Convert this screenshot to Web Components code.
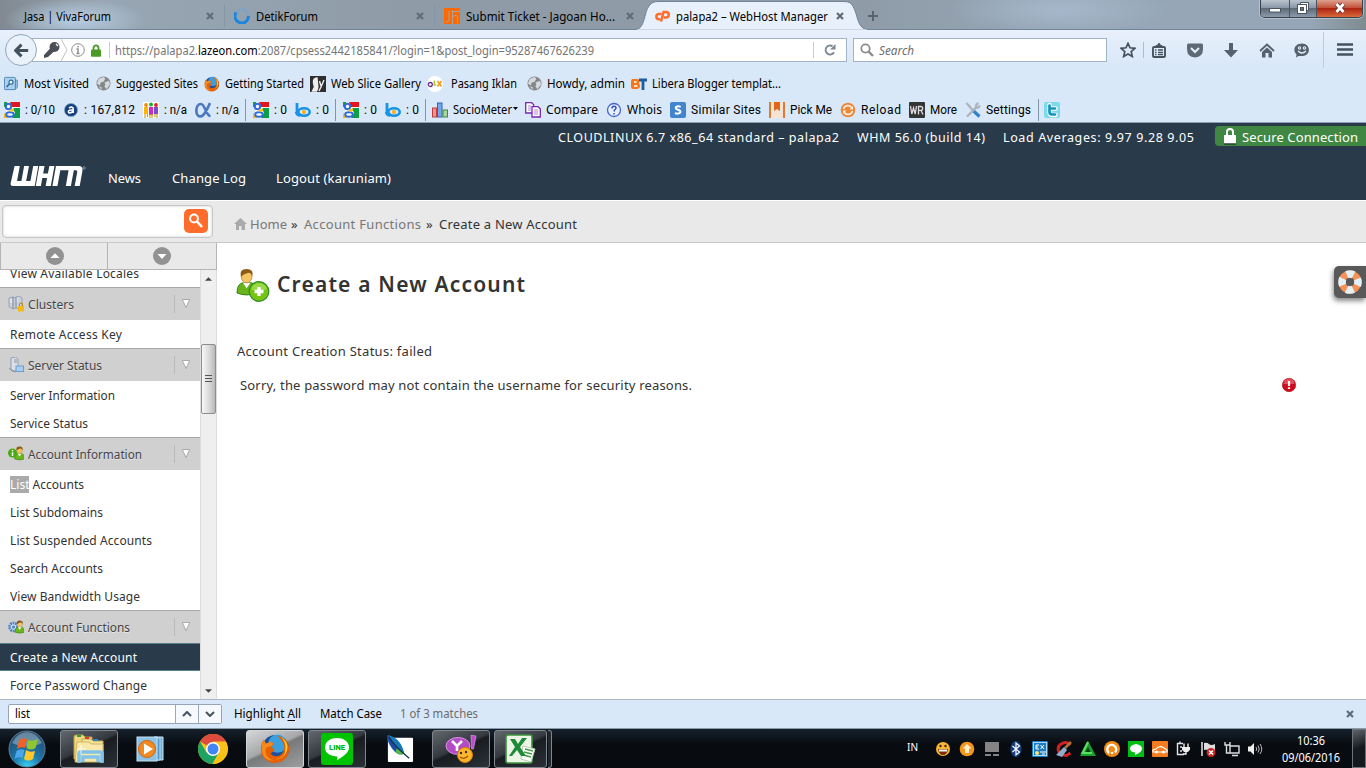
<!DOCTYPE html>
<html lang="en">
<head>
<meta charset="utf-8">
<title>palapa2 – WebHost Manager</title>
<style>
html,body{margin:0;height:100%;overflow:hidden;background:#fff}
body{font:12px "Noto Sans","Open Sans",sans-serif;color:#000;width:1366px;height:768px}
</style>
</head>
<body>
<desk-screen></desk-screen>
<script>
/* ---------- icon drawings: [viewBox width, viewBox height, markup] ---------- */
const fox = `<circle cx="16" cy="16" r="14" fill="#1d4f9c"/><circle cx="18" cy="11" r="9.500" fill="#3ba0dd"/><path d="M18 3c8 1 13 8 12 15-1 8-8 13-15 13S1 25 1 17c0-4 1-8 3-10l2 4 5-2 4 2-3 3c0 2 3 2 3 4l-4 3c2 4 9 4 12 0 4-5 2-12-5-18z" fill="#e66000"/><path d="M22 4c6 4 8 10 5 16-2 4-6 7-11 7 6-1 10-4 10-9 1-5 0-9-4-14z" fill="#ffcb3a"/><path d="M2 14c0-3 1-6 2-7l2 4 5-2 3 2-3 3c-4 0-6 2-5 7 1 4 5 7 9 7C7 30 1 24 2 14z" fill="#f58a1f"/>`;
const google = `<path d="M4 0h12v16H6L2 9z" fill="#fff"/><path d="M6 0h10v5H8z" fill="#e3141c"/><path d="M9 6h7v10H8l3-5z" fill="#0d9c48"/><path d="M0 0h3v2L1 5H0z" fill="#1c9b45"/><path d="M0 11l3 3 1 2H0z" fill="#f7b619"/><circle cx="4.500" cy="4.500" r="2.700" fill="#fff" stroke="#2d6cdc" stroke-width="2"/><ellipse cx="6" cy="12.500" rx="3.800" ry="2.300" fill="#fff" stroke="#2d6cdc" stroke-width="1.900"/><path d="M5 8l5-2v3l-3 1z" fill="#fbc21c"/>`;
const bing = `<path d="M2 0v10.500" stroke="#1593e6" stroke-width="2.800"/><ellipse cx="9" cy="9" rx="5.700" ry="3.700" fill="none" stroke="#1593e6" stroke-width="2.600"/><path d="M1 9q0 3 4 4" fill="none" stroke="#1593e6" stroke-width="2"/><circle cx="9" cy="9" r="2.200" fill="#f9b130"/>`;
const globe = `<circle cx="8" cy="8" r="7.500" fill="#85888b"/><path d="M3 3l5-2 2 2-2 3-3 1-1 3-3-2zM9 7l5-2 1 4-4 5-2-3 1-2zM3 11l3 1v3z" fill="#d6dadd"/>`;
const man = (x,y,s)=>`<g transform="translate(${x} ${y}) scale(${s})"><path d="M0 25q0-10 7-11h7q6 1 6 11-10 4-20 0z" fill="#67b51b" stroke="#2f7a10"/><path d="M6 14l4 6 4-6z" fill="#fff"/><ellipse cx="10" cy="8" rx="5.500" ry="6.500" fill="#f6c463" stroke="#9a6413" stroke-width=".6"/><path d="M4 8Q2 0 10 0q8 0 6 8-1-4-4-4-5 1-8 4z" fill="#8d5a17"/></g>`;
const servers = `<path d="M1 2l4-1v12l-4-2zM5 1l3 1v10l-3 1zM8 1l3-1 3 2v9l-3 2-3-1z" fill="#c9d0da" stroke="#8792a5" stroke-width=".7"/><path d="M2 4h2M2 6h2M9 3h1M9 5h1" stroke="#fff"/>`;
const I = {
back:[18,16,`<path d="M9 1L2 8l7 7M3 8h14" fill="none" stroke="#44505c" stroke-width="3.600"/>`],
key:[17,16,`<circle cx="11.500" cy="5" r="5" fill="#4b5056"/><path d="M8.500 5l3 4L5 15l-4 1v-3z" fill="#4b5056"/><path d="M13 2l2 2" stroke="#fff" stroke-width="1.300"/>`],
info:[14,14,`<circle cx="7" cy="7" r="6.300" fill="none" stroke="#8b8b8b"/><path d="M7 3v1.600M5.500 6H7v4.500M5.500 10.500h3" fill="none" stroke="#8b8b8b" stroke-width="1.400"/>`],
lock:[10,13,`<path d="M2.500 6V4a2.500 2.700 0 0 1 5 0v2" fill="none" stroke="#4a9a25" stroke-width="1.800"/><rect y="5.500" width="10" height="7.200" rx="1" fill="#4a9a25"/>`],
wlock:[12,17,`<path d="M3 7V4a3 3 0 0 1 6 0v3" fill="none" stroke="#fff" stroke-width="2"/><rect y="7" width="12" height="8.500" rx=".5" fill="#fff"/><path d="M0 16h12" stroke="#172218"/>`],
reload:[12,12,`<path d="M10 8.200A4.500 4.500 0 1 1 8.500 2.200" fill="none" stroke="#7d8996" stroke-width="1.900"/><path d="M11.500 0v5.500H6z" fill="#7d8996"/>`],
mag:[14,14,`<circle cx="5.500" cy="5.500" r="4.200" fill="none" stroke="#8c8c8c" stroke-width="1.800"/><path d="M8.700 8.700L13 13" stroke="#8c8c8c" stroke-width="2.400"/>`],
wmag:[16,16,`<circle cx="6" cy="5.500" r="3.900" fill="none" stroke="#fff" stroke-width="2"/><path d="M9 8.500L14 14" stroke="#fff" stroke-width="2.600"/>`],
star:[16,16,`<path d="M8 1.300l2 4.500 4.900.5-3.700 3.300 1.100 4.900L8 12l-4.300 2.500 1.100-4.900L1.100 6.300 6 5.800z" fill="none" stroke="#46535f" stroke-width="1.700"/>`],
clip:[14,15,`<rect x="1" y="4" width="12" height="10" rx="1" fill="none" stroke="#46535f" stroke-width="1.900"/><path d="M4 4V2.500h1.500L6.500.500h1l1 2H10V4z" fill="#46535f" stroke="#46535f"/><path d="M3 7h1.500M6 7h5M3 9.300h1.500M6 9.300h5M3 11.500h1.500M6 11.500h5" stroke="#46535f" stroke-width="1.300"/>`],
pocket:[16,15,`<path d="M1.500.500h13q1.500 0 1.500 1.500v4q0 8-8 8.500Q0 14 0 6V2Q0 .500 1.500.500z" fill="#5d6975"/><path d="M4 5l4 4 4-4" fill="none" stroke="#e6effa" stroke-width="2"/>`],
down:[14,15,`<path d="M5 0h4v7h5l-7 7.500L0 7h5z" fill="#55616d"/>`],
home:[16,15,`<path d="M1 8l7-6.500L15 8" fill="none" stroke="#55616d" stroke-width="1.900"/><path d="M3 9l5-4.500L13 9v5.500H9.500V10h-3v4.500H3z" fill="#55616d"/>`],
chat:[16,15,`<path d="M8 .500c9 0 9 12 1 12.500L4.500 13 2 14.500l.5-3C-2 7 1 .500 8 .500z" fill="#55616d"/><path d="M4 8q4 4 8 0" fill="none" stroke="#e6effa" stroke-width="1.200"/><circle cx="5.500" cy="5" r="1.700" fill="#e6effa"/><circle cx="10.500" cy="5" r="1.700" fill="#e6effa"/><path d="M5.500 4.500v1M10.500 4.500v1" stroke="#46535f"/>`],
menu:[16,14,`<path d="M0 1.500h16M0 6.500h16M0 11.500h16" stroke="#46535f" stroke-width="2.600"/>`],
x:[8,8,`<path d="M1 1l6 6M7 1L1 7" stroke="#5f6d7a" stroke-width="2.200"/>`],
plus:[10,10,`<path d="M5 0v10M0 5h10" stroke="#57636f" stroke-width="2"/>`],
spin:[16,16,`<circle cx="8" cy="8" r="6.500" fill="none" stroke="#76a5cc" stroke-width="2"/><path d="M2 4.500A6.800 6.800 0 1 0 14.500 8" fill="none" stroke="#1b86e0" stroke-width="3"/>`],
jh:[16,16,`<rect width="16" height="16" fill="#ff6a00"/><path d="M5 3v9q0 2-3.500 2M8.500 2v14M9 8.500q4.500-3 4.500 2V16M8 3.500h8" fill="none" stroke="#a9a49f" stroke-width="1"/>`],
cp:[16,12,`<path d="M7.500 4H5a2.600 2.600 0 0 0 0 5.200h1.200" fill="none" stroke="#ff6c2c" stroke-width="2.600"/><path d="M7 11.500L9.600 2H12a2.700 2.700 0 0 1 0 5.500H9.800" fill="none" stroke="#ff6c2c" stroke-width="2.500"/>`],
most:[16,16,`<path d="M13 4h2.500v8L13 15z" fill="#8fbbe0" stroke="#4580b0" stroke-width=".7"/><rect x=".5" y="1" width="12.500" height="14" rx="1" fill="#a9d0ec" stroke="#447fae"/><circle cx="8" cy="6.500" r="2.300" fill="#e6f4ff" stroke="#2e6798" stroke-width="1.300"/><path d="M6.300 8.200L3 12" stroke="#2e6798" stroke-width="1.700"/>`],
globe:[16,16,globe], fox:[32,32,fox], google:[16,16,google], bing:[16,14,bing],
slice:[16,16,`<rect width="16" height="16" fill="#2e2e2e"/><path d="M7 2q-4 0-3.500 5l1 4-2 4h4q2-3 1-7zM9.500 5l1.500 5M14 4l-3 7-2 4" fill="#eee" stroke="#eee" stroke-width="1.400"/>`],
olx:[16,16,`<circle cx="8" cy="8" r="8" fill="#fff"/><circle cx="3.300" cy="8.500" r="2" fill="none" stroke="#6a2d90" stroke-width="1.300"/><path d="M7.300 4.500V9h2" fill="none" stroke="#a8cb2b" stroke-width="1.400"/><path d="M10.500 5l4 5.500M14.500 5l-4 5.500" stroke="#f19a1a" stroke-width="1.500"/>`],
bt:[16,12,`<path d="M1 1h5q3 0 2 4 3 5-2 6H2q-2 0-2-2V3z" fill="#f57717"/><path d="M3 4h2.500M3 8h3.500" stroke="#fff" stroke-width="1.500"/><path d="M8 2h8M12 2v10" stroke="#1f5d9d" stroke-width="2.800"/>`],
alexa:[16,16,`<circle cx="8" cy="8" r="7.500" fill="#163f7d" stroke="#7fa6c6"/><path d="M5.500 5.500q5-2 5 1v5M10 8q-5-.5-5 2t5 0" fill="none" stroke="#fff" stroke-width="1.800"/>`],
people:[16,16,`<rect width="16" height="16" rx="1" fill="#fff"/><g stroke-width="4"><path d="M3 5v7" stroke="#ffb400"/><path d="M8 5v8" stroke="#d02ac5"/><path d="M13 5v7" stroke="#7a4bd0"/></g><circle cx="3" cy="3" r="1.900" fill="#f08c00"/><circle cx="8" cy="2.500" r="1.900" fill="#18ad33"/><circle cx="13" cy="3" r="1.900" fill="#e02020"/><path d="M2 12v4M4.500 12v3M7 12v4M9 12v4M12 12v3M14 12v4" stroke="#c6a224" stroke-width="1.200"/>`],
alpha:[16,16,`<path d="M15 1q-3 7-5.500 10.500-2 3-4.500 3C0 14 0 2 6 2c4 0 5 12 9.500 12" fill="none" stroke="#4b78bf" stroke-width="2.700"/>`],
bars:[16,16,`<rect x=".5" y="6" width="4" height="9" fill="#ef9393" stroke="#c13d3d"/><rect x="5.500" y="1" width="4.500" height="14" fill="#75a7ed" stroke="#2c65b8"/><rect x="11" y="8" width="4.500" height="7" fill="#a5d89a" stroke="#3d8b34"/>`],
compare:[16,16,`<path d="M.7.700h6l2 2V11h-8z" fill="#fff" stroke="#7a26b5" stroke-width="1.300"/><path d="M7 4.700h6l2.300 2V15H7z" fill="#fff" stroke="#7a26b5" stroke-width="1.300"/><path d="M3 4h3M3 6h3M3 8h3M9 8h4M9 10h4M9 12h4" stroke="#b487d6"/>`],
whois:[16,16,`<circle cx="8" cy="8" r="6.500" fill="#e9f0ff" stroke="#4664c9" stroke-width="1.300"/><path d="M6 6.500q0-2.300 2-2.300T10 6q0 1-1.500 2l-.5 1.500M8 11v1.500" fill="none" stroke="#3252bd" stroke-width="1.500"/>`],
s:[16,16,`<rect width="16" height="16" rx="2" fill="#4384cf"/><path d="M10.700 5q-2.700-1.500-4.700 0-1 2 2 2.800 3.500 1 2 3Q8 12.500 5 11" fill="none" stroke="#fff" stroke-width="2"/>`],
pick:[16,16,`<rect width="16" height="16" rx="1" fill="#f4e3d3"/><path d="M1 0v16M15 0v16" stroke="#dc7b34" stroke-width="2"/><path d="M5 0h6v9L8 7 5 9z" fill="#e0661a"/>`],
rel:[16,16,`<circle cx="8" cy="8" r="7.300" fill="#e9883d"/><path d="M3.500 7A4.600 4.600 0 0 1 12 6M12.500 9A4.600 4.600 0 0 1 4 10" fill="none" stroke="#ffe9d2" stroke-width="1.700"/><path d="M13 4v3.500H9.500zM3 12V8.500h3.500z" fill="#ffe9d2"/>`],
wr:[16,16,`<rect width="16" height="16" rx="1" fill="#353535"/><path d="M1.500 4l1.300 8L4.500 6l1.700 6L7.500 4M9.500 12.500V4.500h2.200q2 0 2 1.900t-2 2H10M12 8.500l2 4" fill="none" stroke="#ddd" stroke-width="1.300"/>`],
tools:[16,16,`<path d="M1.500 1l6 7" stroke="#aab2bb" stroke-width="2"/><path d="M8 8.500l6.500 6" stroke="#2f83cf" stroke-width="3.200"/><path d="M2 14.500l9-9q-.5-3 2.500-4.500M15 3.500q-1.500 3-4 2" fill="none" stroke="#aab2bb" stroke-width="2.200"/>`],
tw:[16,16,`<rect width="16" height="16" rx="2" fill="#7bdaef"/><path d="M5.500 3v7q0 3 3 3h3M5.500 6.500h6" fill="none" stroke="#fff" stroke-width="4.500" stroke-linecap="round"/><path d="M5.500 3.500V10q0 2.500 3 2.500h2.500M5.500 6.500h5.500" fill="none" stroke="#1694bd" stroke-width="2.700" stroke-linecap="round"/>`],
whm:[76,22,`<path d="M4.500 1h5.200L7 16h4.300L14 1h4.800L16 16h4.200L23 1h5L24.500 21H3Q0 21 .700 18zM29 1h5.200l-1.400 7.500h4.700L39 1h5l-3.600 20h-5.100l1.400-8H32l-1.400 8h-5.100zM45.500 1H68q4.500 0 3.700 5L69 21h-5l2.600-14q.2-1.800-1.300-1.800h-2.100L60.300 21h-5L58 5.200h-8.200L47 21h-5z" transform="translate(0 0) scale(1.010 1)" fill="#fff"/><circle cx="74" cy="3" r="1.200" fill="none" stroke="#aab4be" stroke-width=".7"/>`],
ghome:[13,12,`<path d="M0 6l6.500-6L13 6h-2v6H7.500V8H5v4H2V6z" fill="#aaa"/>`],
up:[18,18,`<circle cx="9" cy="9" r="9" fill="#929292"/><path d="M4.500 11L9 6.200 13.500 11z" fill="#fff"/>`],
dn:[18,18,`<circle cx="9" cy="9" r="9" fill="#929292"/><path d="M4.500 7L9 12l4.500-5z" fill="#fff"/>`],
tri:[8,9,`<path d="M.3.500h7.400L4 8.500z" fill="#fff" stroke="#8f8f8f" stroke-width=".7"/>`],
clusters:[16,16,servers+`<rect x="10" y="10" width="6" height="5.500" fill="#f5b916"/><path d="M11.500 10V8.500a1.500 1.500 0 0 1 3 0V10" fill="none" stroke="#b98500"/>`],
status:[16,16,`<path d="M3 1l5-1 2 2v10l-4 2-3-2z" fill="#dbe0e7" stroke="#8792a5" stroke-width=".8"/><path d="M6 3h3M6 5h3M1 11l3 3 4 1" stroke="#8792a5" fill="none"/><rect x="8" y="9" width="7.500" height="5.500" fill="#a9cdf1" stroke="#6c9fd2"/>`],
ainfo:[16,16,man(6.500,.5,.5)+`<circle cx="4.500" cy="7" r="4.500" fill="#48ab13"/><path d="M4.500 4v1.300M4.500 6.300V10" stroke="#fff" stroke-width="1.500"/>`],
afun:[16,16,`<circle cx="5.500" cy="8" r="4" fill="#c5dbf1" stroke="#4d82bd" stroke-width="2.600" stroke-dasharray="1.800 .7"/><circle cx="5.500" cy="8" r="1.500" fill="#4d82bd"/>`+man(7,1.5,.47)],
adduser:[34,33,man(1,0,.96)+`<circle cx="23" cy="22.500" r="9.800" fill="#76c312" stroke="#2c8c28" stroke-width="1.200"/><path d="M15 20a8.500 8.500 0 0 1 16 0q-8 4-16 0z" fill="#aae05b" opacity=".7"/><path d="M23 18v9M18.500 22.500h9" stroke="#fff" stroke-width="3.400"/>`],
err:[14,14,`<circle cx="7" cy="7" r="6.700" fill="#d20a1d" stroke="#9b0d18" stroke-width=".6"/><path d="M1.500 6a5.500 5.500 0 0 1 11 0z" fill="#f06a72" opacity=".7"/><path d="M7 3v5M7 9.300v1.800" stroke="#fff" stroke-width="2.200"/>`],
buoy:[24,24,`<circle cx="12" cy="12" r="8" fill="none" stroke="#f49355" stroke-width="7"/><circle cx="12" cy="12" r="8" fill="none" stroke="#e2f0f8" stroke-width="7.600" stroke-dasharray="7 5.566" stroke-dashoffset="3.500"/>`],
chevu:[10,6,`<path d="M1 5l4-4 4 4" fill="none" stroke="#46535f" stroke-width="2"/>`],
chevd:[10,6,`<path d="M1 1l4 4 4-4" fill="none" stroke="#46535f" stroke-width="2"/>`],
au:[8,4,`<path d="M0 4l4-4 4 4z" fill="#444"/>`], ad:[8,4,`<path d="M0 0l4 4 4-4z" fill="#444"/>`],
start:[38,38,`<defs><radialGradient id="a" cx=".5" cy="1" r="1"><stop offset="0" stop-color="#38d3f5"/><stop offset=".4" stop-color="#1c77ac"/><stop offset="1" stop-color="#26445f"/></radialGradient></defs><circle cx="19" cy="19" r="18" fill="url(#a)" stroke="#5c7f99"/><path d="M4 13Q10 2 19 2t15 11q-14 7-30 0z" fill="#cde2ef" opacity=".4"/><path d="M11 10q4-3 8-1l-2 9q-4-2-8 1z" fill="#f0602a"/><path d="M20 10q4 2 10-1l-2.500 9q-5 3-9 0z" fill="#8fc62f"/><path d="M8.500 21q4-3 8-1l-2 8q-4-2-8 1z" fill="#4aa6e8"/><path d="M18 20q4 3 9 1l-2 8q-5 3-9 0z" fill="#fbc92b"/>`],
folder:[34,30,`<path d="M2 3q0-2 2-2h7l2 2h7v22H2z" fill="#f0d77d" stroke="#b79b46"/><path d="M10 5h9l2 2h10v20H10z" fill="#f5e197" stroke="#c4aa55"/><path d="M5 8h12l2 2h12v18H3z" fill="#f8e9ab" stroke="#cdb565"/><path d="M5 2h4" stroke="#25a33a" stroke-width="2"/><path d="M13 4h4" stroke="#d93a25" stroke-width="2"/><path d="M21 6h5" stroke="#2187d5" stroke-width="2"/><path d="M7 29v-9q0-2 2-2h19q2 0 2 2v9M11 28v-5h15v5" fill="none" stroke="#80c2e9" stroke-width="3.500"/><path d="M9 11v9M5 15h9" stroke="#fff" stroke-width=".8"/>`],
media:[28,26,`<path d="M18 1h9v23h-9z" fill="#71aed5" stroke="#cce8f7"/><path d="M15 2h9v22h-9z" fill="#5898c8" stroke="#b6daf0"/><rect x="1" y="1" width="20" height="24" fill="#8ac1e4" stroke="#c4e3f5"/><circle cx="11" cy="13" r="8.500" fill="#f18a21" stroke="#d06511"/><path d="M8 7.500v11l9-5.500z" fill="#fff"/>`],
chrome:[30,30,`<circle cx="15" cy="15" r="15" fill="#fbc116"/><path d="M15 15L2 7.500A15 15 0 0 1 28 7.500H15z" fill="#dd4b3e"/><path d="M2 7.500A15 15 0 0 0 14.500 30L21 18.500 15 15 8.500 18.500z" fill="#1da362"/><path d="M15 8h13a15 15 0 0 1-13.500 22L21 18.500z" fill="#fbc116"/><circle cx="15" cy="15" r="7" fill="#fff"/><circle cx="15" cy="15" r="5.500" fill="#4285f4"/>`],
line:[32,32,`<rect width="32" height="32" rx="3" fill="#00c300"/><path d="M16 5c8 0 12 4.500 12 9.500 0 6-7 9-12 13l.5-4C9 23.500 4 20 4 14.500 4 9.500 8 5 16 5z" fill="#fff"/><text x="16" y="17.300" text-anchor="middle" font-size="7.500" font-weight="900" textLength="16" font-family="Roboto" fill="#00b900">LINE</text>`],
feather:[30,30,`<rect x="3" y="4" width="26" height="25" rx="1" fill="#fff"/><path d="M3 1c9 2 15 9 17 19-4 3-9 0-12-4S1 6 3 1z" fill="#1878bc"/><path d="M3 1q5 10 15 20-8-2-12-9T3 1z" fill="#2445a0"/><path d="M12 15l8 5q-5 3-9-1z" fill="#54b848"/><path d="M4 3q6 10 21 22" fill="none" stroke="#14323f" stroke-width="1.300"/>`],
yahoo:[32,28,`<ellipse cx="13" cy="11" rx="12" ry="8.500" fill="#b14cc3" stroke="#dc92e5"/><path d="M26 0l5 1-2.500 13h-2z" fill="#bc4dcc" stroke="#e4a5ee" stroke-width=".6"/><path d="M7 6l5 5 5-5M12 11v5" fill="none" stroke="#fff" stroke-width="2.600"/><circle cx="20" cy="20" r="7.500" fill="#fdb62a" stroke="#db7d08"/><circle cx="16" cy="18" r="1.200" fill="#333"/><circle cx="21" cy="17" r="1.200" fill="#333"/><path d="M15 22q4 3 8-1" fill="none" stroke="#a05200" stroke-width="1.200"/>`],
excel:[32,30,`<rect x="1" y="1" width="26" height="28" rx="2" fill="#ecf4e6" stroke="#3c913d" stroke-width="1.600"/><path d="M18 12l12 3-4 13-10-3z" fill="#fff" stroke="#bacdb8"/><path d="M20 15l8 2M19 18l8 2M18 21l8 2" stroke="#43a046" stroke-width="1.600"/><path d="M5 5h5l3 5 4-6h5l-7 9 6 9h-5l-4-6-5 6H4l6-9z" fill="#1e8a37"/>`],
smile:[16,16,`<circle cx="8" cy="8" r="7" fill="#f7b733"/><path d="M3 8h10q-1 6-5 6T3 8z" fill="#7d2d06"/><path d="M4 8.500h8v2H4z" fill="#fff"/><circle cx="5.500" cy="5" r="1.200" fill="#422"/><circle cx="10.500" cy="5" r="1.200" fill="#422"/>`],
upd:[16,16,`<circle cx="8" cy="8" r="7.300" fill="#f7941d"/><path d="M8 3l4.500 4.500H10V12H6V7.500H3.500z" fill="#fff2c9"/>`],
pc:[16,16,`<path d="M1 1h14v10H1zM1 13h6v2H1zM9 13h6v2H9z" fill="#858585"/>`],
bt2:[16,16,`<ellipse cx="8" cy="8" rx="5.500" ry="8" fill="#133d7b"/><path d="M4.500 5l7 6L8 14V2l3.500 3-7 6" fill="none" stroke="#fff" stroke-width="1.200"/>`],
ex:[16,16,`<rect width="16" height="16" rx="1" fill="#1b7dc1"/><rect x="1.500" y="1.500" width="13" height="13" fill="none" stroke="#a9dcff"/><path d="M7 4H4v4h3M4 6h2M8.500 4l3.500 4M12 4L8.500 8M8 11h6M10 13h3" stroke="#fff" fill="none"/><circle cx="5" cy="12" r="2" fill="#ffe26a"/>`],
cc:[16,16,`<path d="M14.500 4Q11 0 6 2.500T2.500 10q2 4.500 8 4.500l4-2.500" fill="none" stroke="#d02222" stroke-width="3"/><path d="M15 1L9 7" stroke="#ad7135" stroke-width="2.500"/><path d="M8 6l3 3-5 7-6-2z" fill="#8fadcb"/>`],
gt:[16,16,`<path d="M8 0l8 15H0z" fill="#1d9f30"/><path d="M8 6l2.500 5h-5z" fill="#0a4312"/><path d="M8 1L2.500 12H12" fill="none" stroke="#59df61" stroke-width="2.200"/>`],
av:[16,16,`<circle cx="8" cy="8" r="8" fill="#f08a15"/><path d="M5 12a4.500 4.500 0 1 1 6-.5M8 13v-2" fill="none" stroke="#fff" stroke-width="2.300"/>`],
ln:[16,16,`<rect width="16" height="16" fill="#00bd13"/><path d="M8 3q6 1 6 4.500T7 14v-2.500Q2 11 2 7.500T8 3z" fill="#fff"/>`],
car:[16,16,`<rect width="16" height="16" rx="1" fill="#f47b20"/><path d="M1 11V9l3-1q3-4 8-1l3 2v2z" fill="none" stroke="#fff" stroke-width="1.200"/><circle cx="4.500" cy="11" r="1.500" fill="#fff"/><circle cx="11.500" cy="11" r="1.500" fill="#fff"/>`],
plug:[16,16,`<path d="M8 2.500H2.500v11H9M5 .500v2M5 6h2M5 10h2" stroke="#e4e4e4" stroke-width="1.400" fill="none"/><path d="M7 6h8v2.500l-2 2.500h-4L7 8.500z" fill="#eee"/><path d="M9 2.500V6M13 2.500V6M11 10v3H8" stroke="#eee" stroke-width="1.400" fill="none"/>`],
flag:[16,16,`<path d="M2 1v14" stroke="#ddd" stroke-width="1.600"/><path d="M4 2q3-1 5 1t6 0v8q-4 1-6-1t-5-1z" fill="#ddd"/><circle cx="11" cy="11.500" r="4.500" fill="#cc2222"/><path d="M9 9.500l4 4M13 9.500l-4 4" stroke="#fff" stroke-width="1.600"/>`],
net:[16,16,`<path d="M6 5h9v7H6zM8 14.500h6M2.500 4v8h3M1 1v3h5V1" fill="none" stroke="#ddd" stroke-width="1.400"/>`],
vol:[16,16,`<path d="M1 5.500h2.500L7 2v12l-3.500-3.500H1z" fill="#eee"/><path d="M9 6q1.500 2 0 4M11 4.500q2.500 3.500 0 7M13 3q3.500 5 0 10" fill="none" stroke="#bbb"/>`],
};

/* <ui-icon name w h> draws one of the icons */
customElements.define('ui-icon', class extends HTMLElement{
  connectedCallback(){
    if(this.shadowRoot) return;
    const [vw,vh,m]=I[this.getAttribute('name')];
    const w=this.getAttribute('w')||vw, h=this.getAttribute('h')||vh;
    this.attachShadow({mode:'open'}).innerHTML=`<style>:host{display:block;flex:none;width:${w}px;height:${h}px}svg{display:block}</style><svg width="${w}" height="${h}" viewBox="0 0 ${vw} ${vh}">${m}</svg>`;
  }
});
/* <ui-text w> sets its label to a given width: long labels are condensed, short ones letter-spaced */
customElements.define('ui-text', class extends HTMLElement{
  connectedCallback(){
    if(this.shadowRoot) return;
    this.attachShadow({mode:'open'}).innerHTML=`<style>:host{display:block;flex:none;white-space:pre}span{display:inline-block;transform-origin:0 50%}</style><span><slot></slot></span>`;
    const w=+this.getAttribute('w'), s=this.shadowRoot.querySelector('span');
    if(w){const n=this.textContent.length, nat=s.getBoundingClientRect().width;
      if(nat>w){s.style.transform=`scaleX(${(w/nat).toFixed(4)})`;}
      else s.style.letterSpacing=((w-nat)/Math.max(1,n-1)).toFixed(3)+'px';
      this.style.width=w+'px';}
  }
});
const T=(w,s,css='')=>`<ui-text w="${w}" style="${css}">${s}</ui-text>`;
const ic=(n,w,h)=>`<ui-icon name="${n}"${w?` w="${w}" h="${h||w}"`:''}></ui-icon>`;
/* lays cells out in a flex row; each cell is [start, width, markup], gaps become margins */
const row=(cells,from=0)=>{let p=from;return cells.map(([x,w,m])=>{const g=x-p;p=x+w;return `<div style="flex:none;width:${w}px;margin-left:${g}px">${m}</div>`}).join('')};
const txt=(a,b,s,css)=>[a,b-a,T(b-a,s,css)];
const ico=(c,n,w=16,h)=>[c-w/2,w,ic(n,w,h)];
const sep=(x,h=22,c='#8295a9')=>[x,1,`<div style="height:${h}px;background:${c}"></div>`];
const def=(n,css,html)=>customElements.define(n,class extends HTMLElement{
  connectedCallback(){ if(!this.shadowRoot) this.attachShadow({mode:'open'}).innerHTML=`<style>*{box-sizing:border-box}.r{display:flex;align-items:center}${css}</style>`+(typeof html=='function'?html(this):html); }
});

def('window-buttons',`:host{display:flex;width:103px;height:18px;border:1px solid #39434e;border-top:0;border-radius:0 0 5px 5px;overflow:hidden;box-shadow:0 0 0 1px #c3cdd8aa}
div{height:17px;display:flex;align-items:center;justify-content:center;background:linear-gradient(#b8c3ce,#8b98a5 45%,#5d6b79 50%,#8c9baa)}
.a{width:29px;border-right:1px solid #4a5560}.b{width:27px;border-right:1px solid #4a5560}.c{flex:1;background:linear-gradient(#dea08f,#c4523a 45%,#ad2410 50%,#d96a3c)}svg{flex:none;margin-top:-1px}`,
`<div class="a"><svg width="14" height="12"><rect x="1.500" y="6.500" width="11" height="3.500" fill="#fff" stroke="#4b5560"/></svg></div><div class="b"><svg width="14" height="14"><path d="M4.500 1.500h8v8h-2v-6h-6z" fill="#fff" stroke="#4b5560"/><rect x="1.500" y="3.500" width="9" height="9" fill="#fff" stroke="#4b5560"/><rect x="4.500" y="6.500" width="3" height="3" fill="#667482" stroke="#4b5560"/></svg></div><div class="c"><svg width="16" height="14"><path d="M4.500 3l7 8M11.500 3l-7 8" stroke="#5b2a2a" stroke-width="4.500"/><path d="M4.500 3l7 8M11.500 3l-7 8" stroke="#fff" stroke-width="2.900"/></svg></div>`);

def('tab-strip',`:host{display:flex;position:relative;height:30px;border-bottom:1px solid #73849a;background:radial-gradient(ellipse 70px 22px at 75px 20px,#b7cfe3,#b7cfe300),radial-gradient(ellipse 110px 25px at 1060px 10px,#a5b8cb,#a5b8cb00),linear-gradient(90deg,#818a93,#98a6b3 8%,#8f9ca8 30%,#8e9aa5 60%,#96a6b6 78%,#96a6b6 96%,#7f8b8e)}
.r{height:30px;padding-top:2px}window-buttons{margin-left:382px;align-self:flex-start}.shape{position:absolute;left:636px;top:0}.r{position:relative}`,
()=>`<svg class="shape" width="232" height="30"><path d="M0 29.500C9 29 8 12 13 6q3-4.500 9-4.500h186q7 0 9 5c5 8 4 22 14 23V30H0z" fill="#e8f0fb" stroke="#73849a"/><path d="M1 30h230" stroke="#e8f0fb"/></svg><div class="r">${row([
txt(24,111,'Jasa | VivaForum'),ico(210,'x',8),sep(224),ico(242,'spin'),txt(256,318,'DetikForum'),ico(420,'x',8),sep(434),ico(452,'jh'),txt(466,615,'Submit Ticket - Jagoan Ho...'),ico(630,'x',8),ico(662,'cp',16,12),txt(676,828,'palapa2 – WebHost Manager'),ico(840,'x',8),ico(873,'plus',10)])}</div><window-buttons></window-buttons>`);

def('nav-bar',`:host{display:flex;align-items:center;height:40px}
.back{width:32px;height:32px;border-radius:50%;border:1px solid #93a7be;background:#e9f1fa;display:flex;align-items:center;justify-content:center;margin-left:5px;position:relative;z-index:1}
.url{display:flex;align-items:center;width:815px;height:24px;margin-left:-5px;border:1px solid #9fb4cb;background:#fff;color:#757575}b{font-weight:400;color:#000}
.s{display:flex;align-items:center;width:254px;height:24px;margin-left:6px;border:1px solid #9fb4cb;background:#fff;color:#6d6d6d;font-style:italic}`,
()=>`<div class="back">${ic('back',15,15)}</div><div class="url">${row([ico(51,'key',17,16),[61,7,'<svg style="display:block" width="7" height="22"><path d="M0 0l6 11-6 11" fill="none" stroke="#c2c2c2"/></svg>'],ico(78,'info',14),ico(96,'lock',10,13),sep(109,16,'#ccc'),txt(115,594,'https://palapa2.<b>lazeon.com</b>:2087/cpsess2442185841/?login=1&amp;post_login=95287467626239'),sep(813,16,'#ccc'),ico(830,'reload',12)],33)}</div><div class="s">${row([ico(867,'mag',14),txt(879,914,'Search')],854)}</div>${row([ico(1128,'star'),sep(1143,16,'#aabccf'),ico(1159,'clip',14,15),ico(1195,'pocket',16,15),ico(1231,'down',14,15),ico(1267,'home',16,15),ico(1302,'chat',16,15),sep(1323,36,'#bccddd'),ico(1345,'menu',16,14)],1107)}`);

def('bookmark-bar',`:host{display:flex;align-items:center;height:27px}`,()=>row([
ico(11,'most',14,15),txt(24,89,'Most Visited'),ico(103,'globe',15),txt(116,198,'Suggested Sites'),ico(212,'fox'),txt(225,304,'Getting Started'),ico(318,'slice'),txt(331,421,'Web Slice Gallery'),ico(435,'olx'),txt(451,517,'Pasang Iklan'),ico(534,'globe',15),txt(547,625,'Howdy, admin'),ico(639,'bt',16,12),txt(652,781,'Libera Blogger templat...')]));

const R='font-family:Roboto,sans-serif;';
def('seo-bar',`:host{display:flex;align-items:center;height:25px}`,()=>row([
ico(12,'google'),txt(25,55,': 0/10',R),ico(71,'alexa',14),txt(84,135,': 167,812',R),ico(151,'people'),txt(164,187,': n/a',R),ico(203,'alpha'),txt(216,239,': n/a',R),sep(245),ico(261,'google'),txt(274,287,': 0',R),ico(303,'bing',16,14),txt(316,329,': 0',R),sep(335),ico(351,'google'),txt(364,377,': 0',R),ico(393,'bing',16,14),txt(406,419,': 0',R),sep(425),ico(440,'bars'),txt(453,512,'SocioMeter'),[513,5,'<svg style="display:block" width="5" height="5"><path d="M0 0h5L2.500 3z"/></svg>'],ico(533,'compare'),txt(546,598,'Compare'),ico(614,'whois'),txt(627,662,'Whois'),ico(678,'s'),txt(691,761,'Similar Sites',R),ico(777,'pick'),txt(790,832,'Pick Me',R),ico(848,'rel'),txt(861,901,'Reload',R),ico(917,'wr'),txt(930,957,'More',R),ico(973,'tools'),txt(986,1031,'Settings',R),sep(1038),ico(1052,'tw')]));

def('browser-chrome',`:host{display:block;height:123px}.b{height:93px;background:linear-gradient(#e8f0fb,#d9e8f8 38%);border-bottom:1px solid #8e9eb1}`,`<tab-strip></tab-strip><div class="b"><nav-bar></nav-bar><bookmark-bar></bookmark-bar><seo-bar></seo-bar></div>`);

def('whm-header',`:host{display:block;height:78px;background:#293a4a;color:#fff;font-size:13px;border-bottom:1px solid #fff}.u{height:29px}.d{height:48px}.d ui-text{margin-top:4px}.sec{display:flex;align-items:center;height:20px;margin:-3px 0 0 21px;width:151px;background:#3f8742;border-radius:4px 0 0 4px}.sec ui-text{margin-top:2px}`,
()=>`<div class="r u">${row([txt(558,839,'CLOUDLINUX 6.7 x86_64 standard – palapa2','font-size:12.5px'),txt(857,985,'WHM 56.0 (build 14)','font-size:12.5px'),txt(1003,1194,'Load Averages: 9.97 9.28 9.05','font-size:12.5px')])}<div class="sec">${row([ico(1230,'wlock',12,17),txt(1242,1358,'Secure Connection')],1215)}</div></div><div class="r d">${row([[10,76,ic('whm',76,22)],txt(108,141,'News'),txt(172,246,'Change Log'),txt(276,391,'Logout (karuniam)')])}</div>`);

def('crumb-bar',`:host{display:flex;align-items:center;height:42px;background:#e9e9e9;border-bottom:1px solid #c8c8c8;font-size:13px;color:#777}
.s{display:flex;align-items:center;justify-content:flex-end;width:211px;height:33px;margin:0 0 1px 2px;background:#fff;border:1px solid #c6c6c6;border-radius:4px;padding-right:4px;box-shadow:inset 0 0 3px #ccc}.g{width:24px;height:24px;background:#ff6c2c;border-radius:5px;padding:4px}.r{padding-top:5px}`,
()=>`<div class="s"><div class="g">${ic('wmag')}</div></div><div class="r">${row([[234,13,ic('ghome')],txt(250,287,'Home'),txt(291,298,'»','color:#333'),txt(304,421,'Account Functions'),txt(426,433,'»','color:#333'),txt(439,577,'Create a New Account','color:#333')],213)}</div>`);

def('menu-group',`:host{display:flex;align-items:center;height:33px;background:#d0d0d0;border-top:1px solid #a9a9a9;color:#444;text-shadow:0 1px 0 #fff8;padding-left:8px}ui-text{margin-left:4px}.v{margin-left:auto;width:26px;height:18px;border-left:1px solid #b9b9b9;display:flex;padding:4px 0 0 7px;margin-top:-1px}`,
e=>`${ic(e.getAttribute('icon'))}${T(e.getAttribute('w'),e.getAttribute('label'))}<div class="v">${ic('tri')}</div>`);
def('menu-link',`:host{display:flex;align-items:center;height:28px;color:#333;padding:0 0 0 10px}:host([on]){background:#293a4a;color:#fff;box-shadow:inset 0 1px #59818a,inset 0 -1px #59818a}`,`<slot></slot>`);
const L=(s,b,on='')=>`<menu-link ${on}>${T(b-10,s)}</menu-link>`;
const G=(s,b,i)=>`<menu-group icon="${i}" label="${s}" w="${b-28}"></menu-group>`;
def('side-menu',`:host{display:block;width:217px;height:456px;font-size:12px}
.t{display:flex;height:27px;background:#e9e9e9;border-bottom:1px solid #b5b5b5}.t div{width:107px;border-left:1px solid #b5b5b5;padding-left:1px;display:flex;justify-content:center;align-items:center}.t div+div{width:110px;border-right:1px solid #b5b5b5;padding:0}
.m{display:flex;height:429px}.l{width:200px;overflow:hidden;background:#fff}.l menu-link:first-child{margin-top:-11px}
.sb{width:17px;background:#efefef;border-right:1px solid #dedede;border-left:1px solid #dedede;display:flex;flex-direction:column;align-items:center;justify-content:space-between;padding:7px 0 6px}.th{width:15px;height:70px;margin:63px 0 auto;flex:none;border:1px solid #8d8d8d;border-radius:2px;background:linear-gradient(90deg,#f7f7f7,#dcdcdc 50%,#b9b9b9);display:flex;align-items:center;justify-content:center}`,
()=>`<div class="t"><div>${ic('up')}</div><div>${ic('dn')}</div></div><div class="m"><div class="l">${L('View Available Locales',139)}${G('Clusters',74,'clusters')}${L('Remote Access Key',122)}${G('Server Status',102,'status')}${L('Server Information',115)}${L('Service Status',88)}${G('Account Information',142,'ainfo')}<menu-link><ui-text w="74"><span style="background:#aaa;color:#fff">List</span> Accounts</ui-text></menu-link>${L('List Subdomains',103)}${L('List Suspended Accounts',152)}${L('Search Accounts',103)}${L('View Bandwidth Usage',140)}${G('Account Functions',130,'afun')}${L('Create a New Account',137,'on')}${L('Force Password Change',147)}</div><div class="sb">${ic('au',7,4)}<div class="th"><svg width="7" height="8"><path d="M0 .500h7M0 3.500h7M0 6.500h7" stroke="#555"/></svg></div>${ic('ad',7,4)}</div></div>`);

def('account-page',`:host{display:block;position:relative;flex:1;height:456px;background:#fff;color:#333;font-size:13px}
.h{height:34px;margin:25px 0 0 19px}.st{margin:39px 0 0 20px;height:20px}.ms{margin:14px 0 0 23px;height:20px}
.help{position:absolute;right:0;top:23px;width:32px;height:32px;background:#595959;border-radius:5px 0 0 5px;box-shadow:-1px 3px 5px #0007;padding:4px}`,
()=>`<div class="r h">${row([[0,34,ic('adduser')],[41,248,T(248,'Create a New Account','font:600 21px \'Noto Sans\',sans-serif;color:#333;line-height:30px;margin-top:-3px')]])}</div><div class="r st">${T(195,'Account Creation Status: failed')}</div><div class="r ms">${row([[0,452,T(452,'Sorry, the password may not contain the username for security reasons.')],[1042,14,ic('err')]])}</div><div class="help">${ic('buoy')}</div>`);

def('find-bar',`:host{display:flex;align-items:center;height:29px;background:#d9e8f8;border-top:1px solid #a9b6c6}.f{display:flex;width:214px;height:20px;margin-left:8px;border:1px solid #95a5b8;background:#fff;border-radius:2px}.f>ui-text{margin:0 0 0 6px;line-height:18px}.f div{width:23px;border-left:1px solid #9aa9ba;background:#f6f9fd;display:flex;align-items:center;justify-content:center}.f .p{margin-left:auto}u{text-underline-offset:2px}.k{margin-top:-1px}`,
()=>`<div class="f">${T(15,'list')}<div class="p">${ic('chevu')}</div><div>${ic('chevd')}</div></div><div class="r k">${row([txt(234,301,'Highlight <u>A</u>ll'),txt(320,382,'Mat<u>c</u>h Case'),txt(400,478,'1 of 3 matches','color:#6b6b6b'),ico(1350,'x',8)],222)}</div>`);

def('task-button',`:host{display:flex;width:100%;height:38px;box-sizing:border-box;align-items:center;justify-content:center}:host([open]){border:1px solid #7f868d;border-radius:3px;background:linear-gradient(155deg,#62686e,#34393f 45%,#191d22 50%,#2b3137)}:host([active]){border:1px solid #d3d6d9;background:linear-gradient(155deg,#d6d7d8,#a5a7a9 45%,#77797b 50%,#9c9ea0)}`,`<slot></slot>`);
const B=(x,w,st,n,a,b)=>[x,w,`<task-button ${st}>${ic(n,a,b)}</task-button>`];
def('task-bar',`:host{display:flex;height:40px;background:linear-gradient(#16202b,#080c11 40%,#070a0e);border-top:1px solid #879ba8;color:#fff;align-items:center}.c{display:flex;flex-direction:column;align-items:center;gap:0}.c ui-text{line-height:17px;height:17px}.d{width:14px;height:39px;border:1px solid #6b737b;background:linear-gradient(160deg,#5c6369,#15191e 50%)}`,
()=>row([[8,38,ic('start',38,38)],B(60,58,'open','folder',34,30),B(136,28,'','media',28,26),B(198,30,'','chrome',30,30),B(246,58,'open active','fox',31,31),B(308,58,'open','line',32,32),B(384,30,'','feather',29,29),B(432,58,'open','yahoo',32,28),B(494,53,'open','excel',32,30),[548,4,'<div style="height:38px;border:1px solid #7f868d;border-left:0;border-radius:0 3px 3px 0;background:#20262c"></div>'],txt(907,918,'IN','font-size:11.5px;margin-top:-5px')])+row([...'smile:943 upd:967 pc:992 bt2:1016 ex:1040 cc:1064 gt:1088 av:1112 ln:1136 car:1160 plug:1183 flag:1208 net:1232 vol:1255'.split(' ').map(s=>{const[n,c]=s.split(':');return ico(+c,n,16)}),[1282,58,`<div class="c">${T(28,'10:36')}${T(58,'09/06/2016')}</div>`],[1352,14,'<div class="d"></div>']],918));

def('desk-screen',`:host{display:flex;flex-direction:column;width:1366px;height:768px;overflow:hidden}.m{display:flex;height:456px}`,`<browser-chrome></browser-chrome><whm-header></whm-header><crumb-bar></crumb-bar><div class="m"><side-menu></side-menu><account-page></account-page></div><find-bar></find-bar><task-bar></task-bar>`);
</script>
</body>
</html>
